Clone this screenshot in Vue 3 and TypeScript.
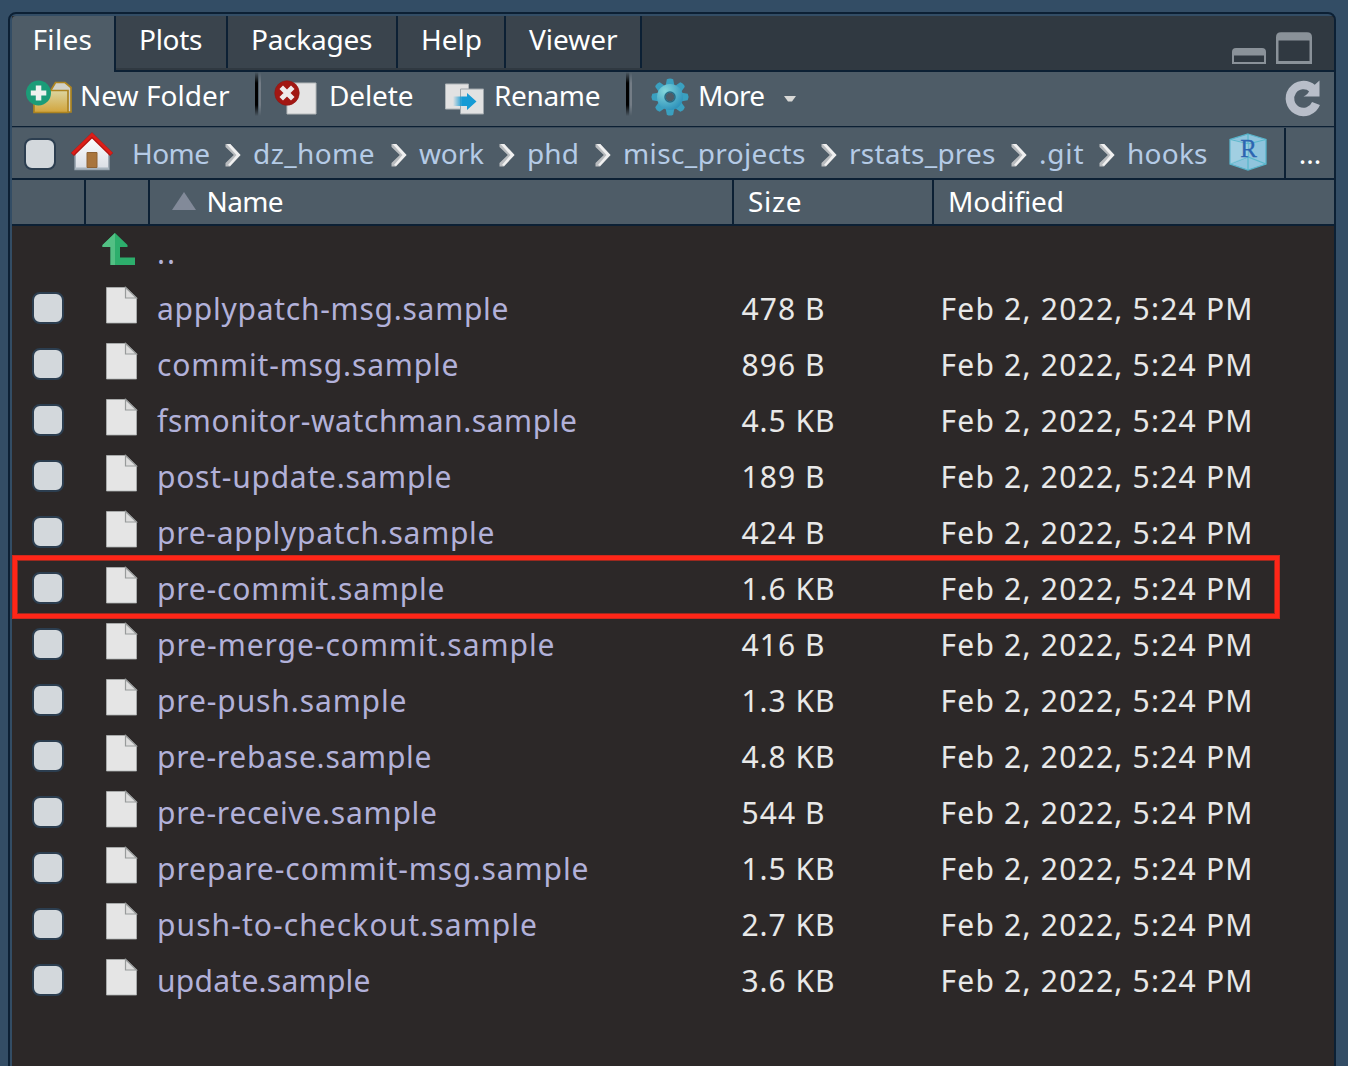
<script setup lang="ts">
interface Label { text: string; width: number }
interface FileRow { name: string; width: number; size: string; marked?: boolean }

const ctx = document.createElement('canvas').getContext('2d')!

// Spreads the letters so that a label takes up the given width.
function track(text: string, size: number, width: number): { letterSpacing: string } {
  ctx.font = `${size}px "Noto Sans"`
  const gap = (width - ctx.measureText(text).width) / Math.max(1, text.length - 1)
  return { letterSpacing: `${gap.toFixed(3)}px` }
}

const tabs: (Label & { box: number })[] = [
  { text: 'Files', width: 59.5, box: 104 },
  { text: 'Plots', width: 63.5, box: 112 },
  { text: 'Packages', width: 121.5, box: 170 },
  { text: 'Help', width: 61, box: 108 },
  { text: 'Viewer', width: 88.5, box: 136 },
]

const crumbs: (Label & { box: number })[] = [
  { text: 'Home', width: 78, box: 93 },
  { text: 'dz_home', width: 121.5, box: 138 },
  { text: 'work', width: 65, box: 80 },
  { text: 'phd', width: 52, box: 68 },
  { text: 'misc_projects', width: 182.5, box: 198 },
  { text: 'rstats_pres', width: 146.5, box: 162 },
  { text: '.git', width: 44.5, box: 60 },
  { text: 'hooks', width: 80.5, box: 103 },
]

const files: FileRow[] = [
  { name: 'applypatch-msg.sample', width: 351.5, size: '478 B' },
  { name: 'commit-msg.sample', width: 301.5, size: '896 B' },
  { name: 'fsmonitor-watchman.sample', width: 420, size: '4.5 KB' },
  { name: 'post-update.sample', width: 294.5, size: '189 B' },
  { name: 'pre-applypatch.sample', width: 337.5, size: '424 B' },
  { name: 'pre-commit.sample', width: 287.5, size: '1.6 KB', marked: true },
  { name: 'pre-merge-commit.sample', width: 397.5, size: '416 B' },
  { name: 'pre-push.sample', width: 249.5, size: '1.3 KB' },
  { name: 'pre-rebase.sample', width: 274.5, size: '4.8 KB' },
  { name: 'pre-receive.sample', width: 280, size: '544 B' },
  { name: 'prepare-commit-msg.sample', width: 431.5, size: '1.5 KB' },
  { name: 'push-to-checkout.sample', width: 380, size: '2.7 KB' },
  { name: 'update.sample', width: 213.5, size: '3.6 KB' },
]
const modified = 'Feb 2, 2022, 5:24 PM'
const teeth = [0, 45, 90, 135, 180, 225, 270, 315]
</script>

<template>
  <div class="page">
    <div class="panel">
      <div class="tabs">
        <div v-for="(t, i) in tabs" :key="t.text" class="tab" :class="{ active: i === 0 }" :style="{ width: t.box + 'px' }">
          <span :style="track(t.text, 28, t.width)">{{ t.text }}</span>
        </div>
        <svg class="window" width="80" height="32" viewBox="0 0 80 32">
          <path d="M0 32V20q0-4 4-4h26q4 0 4 4v12zM2 23.500v6.500h30v-6.500z" fill="#8a9299" fill-rule="evenodd" />
          <path d="M44 32V5.300q0-5 5-5h26q5 0 5 5v26.700zM46.500 8.500v20.500h31v-20.500z" fill="#8a9299" fill-rule="evenodd" />
        </svg>
      </div>

      <div class="toolbar">
        <svg class="i-folder" width="48" height="38" viewBox="0 0 48 38">
          <defs>
            <linearGradient id="gold" x1="0" y1="0" x2="0" y2="1"><stop offset="0" stop-color="#dcd5a0" /><stop offset="1" stop-color="#d2a43b" /></linearGradient>
          </defs>
          <path d="M25 11 29.500 3.500h9.500l6 5V33h-6z" fill="#d1d1c8" stroke="#ad8420" stroke-width="1.700" />
          <path d="M8 11.500h34v22H8z" fill="url(#gold)" stroke="#ad8420" stroke-width="1.700" />
          <circle cx="12.500" cy="14" r="12.500" fill="#1b9c78" />
          <path d="M9.800 6.500h5.500v5h5v5h-5v5H9.800v-5h-5v-5h5z" fill="#eef2ef" />
        </svg>
        <span class="t-new" :style="track('New Folder', 28, 149.5)">New Folder</span>
        <i class="sep"></i>
        <svg class="i-delete" width="44" height="36" viewBox="0 0 44 36">
          <path d="M13 3h29v31H13z" fill="#e4e4e4" stroke="#b4b8ba" />
          <circle cx="13" cy="13" r="12.300" fill="#a21713" stroke="#8a1512" stroke-opacity=".5" />
          <path d="m9 9 8 8m0-8-8 8" stroke="#eeeaea" stroke-width="5" stroke-linecap="square" />
        </svg>
        <span class="t-delete" :style="track('Delete', 28, 84.5)">Delete</span>
        <svg class="i-rename" width="40" height="34" viewBox="0 0 40 34">
          <path d="M.5 2h23v25H.5z" fill="#e2e2e2" stroke="#aeb4b8" />
          <path d="M15.500 7h23v25h-23z" fill="#e2e2e2" stroke="#9ea5aa" />
          <defs><linearGradient id="fade"><stop offset="0" stop-color="#169bd5" stop-opacity="0" /><stop offset=".4" stop-color="#169bd5" /></linearGradient></defs>
          <path d="M8 14.500h14V11l9.500 8.500-9.500 8.500v-4H8z" fill="url(#fade)" />
        </svg>
        <span class="t-rename" :style="track('Rename', 28, 106.500)">Rename</span>
        <i class="sep"></i>
        <svg class="i-gear" width="38" height="38" viewBox="0 0 38 38">
          <defs><radialGradient id="teal" gradientUnits="userSpaceOnUse" cx="14" cy="13" r="24"><stop offset="0" stop-color="#83d7dc" /><stop offset="1" stop-color="#1f86b5" /></radialGradient></defs>
          <path v-for="a in teeth" :key="a" d="M15.800 1.300q3.200-1.800 6.400 0L23.500 8.500h-9z" fill="#3aa0c0" :transform="`rotate(${a} 19 19)`" />
          <path d="M19 6a13 13 0 1 1 0 26 13 13 0 0 1 0-26zm0 8.500a4.500 4.500 0 1 0 0 9 4.500 4.500 0 0 0 0-9z" fill="url(#teal)" />
          <circle cx="19" cy="19" r="5" fill="none" stroke="#286b85" stroke-width="1.500" />
        </svg>
        <span class="t-more" :style="track('More', 28, 67)">More</span>
        <svg class="i-caret" width="14" height="8" viewBox="0 0 14 8"><path d="M1 1h12L9 6.500H5z" fill="#d8d8d6" /></svg>
        <svg class="i-refresh" width="36" height="38" viewBox="0 0 36 38">
          <path d="M31 24.500A13.500 13.500 0 1 1 27.500 9.500" fill="none" stroke="#b8bec9" stroke-width="8.500" />
          <path d="M34.500 1.500V17.500H18.500q5-2 6-7z" fill="#b8bec9" />
        </svg>
      </div>

      <div class="path">
        <i class="check top"></i>
        <svg class="i-home" width="42" height="39" viewBox="0 0 42 39">
          <defs><linearGradient id="wall" x1="0" y1="0" x2="0" y2="1"><stop offset="0" stop-color="#fff" /><stop offset="1" stop-color="#d9dde4" /></linearGradient></defs>
          <path d="M4 19 21 4l17 15v18.500H4z" fill="url(#wall)" stroke="#8e9ba7" stroke-width="1.500" />
          <path d="M4 36.500h34" stroke="#a8b4be" stroke-width="2" />
          <path d="M16 20.500h10v15H16z" fill="#a9753d" stroke="#8e6234" />
          <path d="M1.500 22.500 21 3.500l19.500 19" fill="none" stroke="#b41410" stroke-width="4.500" />
          <path d="M1.500 21.800 21 2.800l19.500 19" fill="none" stroke="#dc1f19" stroke-width="2.800" />
        </svg>
        <div class="crumbs">
          <template v-for="(c, i) in crumbs" :key="c.text">
            <svg v-if="i > 0" class="chev" width="28" height="24" viewBox="0 0 28 24">
              <path d="M.5 1H5.200L15.500 12 5 23.500H.5V20L8.800 12 .5 4z" fill="#b9bcbf" />
              <path d="M1.500 1H5.200L15.500 12 5 23 3 22 11.500 12z" fill="#f0f0f0" />
            </svg>
            <span :style="{ width: c.box + 'px', ...track(c.text, 28, c.width) }">{{ c.text }}</span>
          </template>
        </div>
        <svg class="i-cube" width="38" height="38" viewBox="0 0 38 38">
          <path d="M19 1 37 6.500v24.500L19 37 1 31V6.500z" fill="#8fc4dd" stroke="#57b3ca" stroke-width="1.300" />
          <path d="M1 6.500 19 11l18-4.500M19 1v36M1 31l18-7 18 7" fill="none" stroke="#58b8cb" stroke-width="1.200" />
          <path d="m1.500 7 17.500 4v13L1.500 31z" fill="#b4d9e8" opacity=".5" />
          <text x="19.500" y="23.500" text-anchor="middle" font-family="Liberation Serif, serif" font-size="25" fill="#2d65b1" stroke="#2d65b1" stroke-width=".3">R</text>
        </svg>
        <button class="more">...</button>
      </div>

      <div class="head">
        <div class="c1"></div>
        <div class="c2"></div>
        <div class="c3">
          <svg width="24" height="18" viewBox="0 0 24 18"><path d="M12 0l12 18H0z" fill="#828a99" /></svg>
          <span :style="track('Name', 28, 77)">Name</span>
        </div>
        <div class="c4"><span :style="track('Size', 28, 53.5)">Size</span></div>
        <div class="c5"><span :style="track('Modified', 28, 116)">Modified</span></div>
      </div>

      <div class="row">
        <div class="r1"></div>
        <svg class="i-up" width="33" height="34" viewBox="0 0 33 34">
          <path d="M13 1 25.500 13v2H18v10.500h15V33H8.500V15H.5v-2z" fill="#2dae6c" />
          <path d="M13 1v32H8.500V15H.5v-2z" fill="#53c084" />
        </svg>
        <span class="name up">..</span>
      </div>
      <div v-for="f in files" :key="f.name" class="row">
        <div class="r1"><i class="check"></i></div>
        <svg class="i-file" width="32" height="37" viewBox="0 0 32 37">
          <path d="M.5.500h19.500L30.500 11v25H.5z" fill="#e5e5e5" stroke="#aeb3b3" stroke-width=".8" />
          <path d="M19.500 .5V11h11z" fill="#dedede" stroke="#989b9b" stroke-width="1.200" />
        </svg>
        <span class="name" :style="track(f.name, 30, f.width)">{{ f.name }}</span>
        <span class="size" :style="track(f.size, 30, f.size.length === 5 ? 83 : 93)">{{ f.size }}</span>
        <span class="date" :style="track(modified, 30, 312)">{{ modified }}</span>
        <div v-if="f.marked" class="mark"></div>
      </div>
    </div>
  </div>
</template>

<style>
body { background: #334d65; }
</style>

<style scoped>
* { box-sizing: border-box; }
.page {
  height: 1066px;
  padding: 12px 12px 0 8px;
  overflow: hidden;
  background: #334d65;
  font-family: "Noto Sans", sans-serif;
  font-size: 28px;
  color: #fff;
  white-space: pre;
}
svg { display: block; flex: none; overflow: visible; }
span { display: block; flex: none; }
.panel {
  width: 1328px;
  height: 1080px;
  padding: 2px 0 0 2px;
  border: 2px solid #0c2034;
  border-radius: 8px;
  background: linear-gradient(#2c2828, #2c2828) 2px 2px no-repeat #334d65;
}
.tabs {
  display: flex;
  align-items: flex-start;
  height: 56px;
  background: #303941;
  border-bottom: 2px solid #0c2034;
  border-radius: 4px 4px 0 0;
  line-height: 46px;
}
.tab {
  height: 52px;
  flex: none;
  padding-left: 23px;
  background: #3a444d;
  border-right: 2px solid #0c2034;
}
.tab.active { height: 56px; padding-left: 20.500px; background: #4e5c67; border-top-left-radius: 4px; }
.window { margin: 16px 22px 0 auto; }
.toolbar {
  display: flex;
  align-items: flex-start;
  height: 56px;
  background: #4e5c67;
  border-bottom: 1px solid #3b4b5a;
  box-shadow: inset 0 -1px #0c2034;
  line-height: 46px;
}
.i-folder { margin: 7px 0 0 14px; }
.t-new { width: 175px; margin-left: 6px; }
.sep {
  flex: none;
  width: 6px;
  height: 44px;
  background: linear-gradient(90deg, #000 0 3px, #4e5c67 3px 4px, #747d86 4px);
  mask-image: linear-gradient(transparent, #000 25%, #000 75%, transparent);
}
.i-delete { margin: 8px 0 0 13px; }
.t-delete { width: 116px; margin-left: 11px; }
.i-rename { margin-top: 10px; }
.t-rename { width: 132px; margin-left: 9px; }
.i-gear { margin: 6px 0 0 19px; }
.t-more { width: 85px; margin-left: 9px; }
.i-caret { margin-top: 23px; }
.i-refresh { margin: 7px 13px 0 auto; }
.path {
  display: flex;
  height: 52px;
  background: #4e5c67;
  border-bottom: 2px solid #0c2034;
  line-height: 51px;
  color: #b5cbe6;
}
.check {
  display: block;
  flex: none;
  width: 32px;
  height: 32px;
  background: #d3d8dc;
  border: 2px solid #2c3e50;
  border-radius: 8px;
}
.check.top { margin: 10px 0 0 12px; }
.i-home { margin: 4px 0 0 15px; }
.crumbs { display: flex; width: 1098px; margin-left: 19px; }
.chev { margin-top: 15px; }
.i-cube { margin: 5px 0 0 -1px; }
.more {
  width: 50px;
  height: 50px;
  margin-left: auto;
  padding: 0;
  background: none;
  border: 0;
  border-left: 2px solid #0c2034;
  font: 28px/50px "Noto Sans", sans-serif;
  color: #fff;
}
.head {
  display: flex;
  height: 46px;
  background: #4e5c67;
  border-bottom: 2px solid #0c2034;
  line-height: 43px;
}
.head > div { display: flex; flex: none; border-right: 2px solid #0c2034; }
.head .c1 { width: 74px; }
.head .c2 { width: 64px; }
.head .c3 { width: 584px; padding-left: 22px; gap: 10.500px; }
.head .c3 svg { margin-top: 12px; }
.head .c4 { width: 200px; padding-left: 14px; }
.head .c5 { flex: 1; padding-left: 14px; border: 0; }
.row {
  position: relative;
  display: flex;
  height: 56px;
  font-size: 30px;
  line-height: 54px;
}
.r1 { width: 94px; flex: none; padding: 10px 0 0 20px; }
.i-up { margin: 6px 0 0 -4px; }
.i-file { margin-top: 5px; }
.name { width: 584.500px; margin-left: 19px; color: #b2b1d9; }
.name.up { margin-left: 22px; letter-spacing: 2px; }
.size { width: 199px; color: #e8e8e8; }
.date { color: #e8e8e8; }
.mark {
  position: absolute;
  top: -6px;
  left: 1px;
  width: 1266px;
  height: 62px;
  border: 4px solid #ff2618;
  box-shadow: 0 0 0 1px #cf281c, inset 0 0 0 1px #9c291f;
}
</style>
